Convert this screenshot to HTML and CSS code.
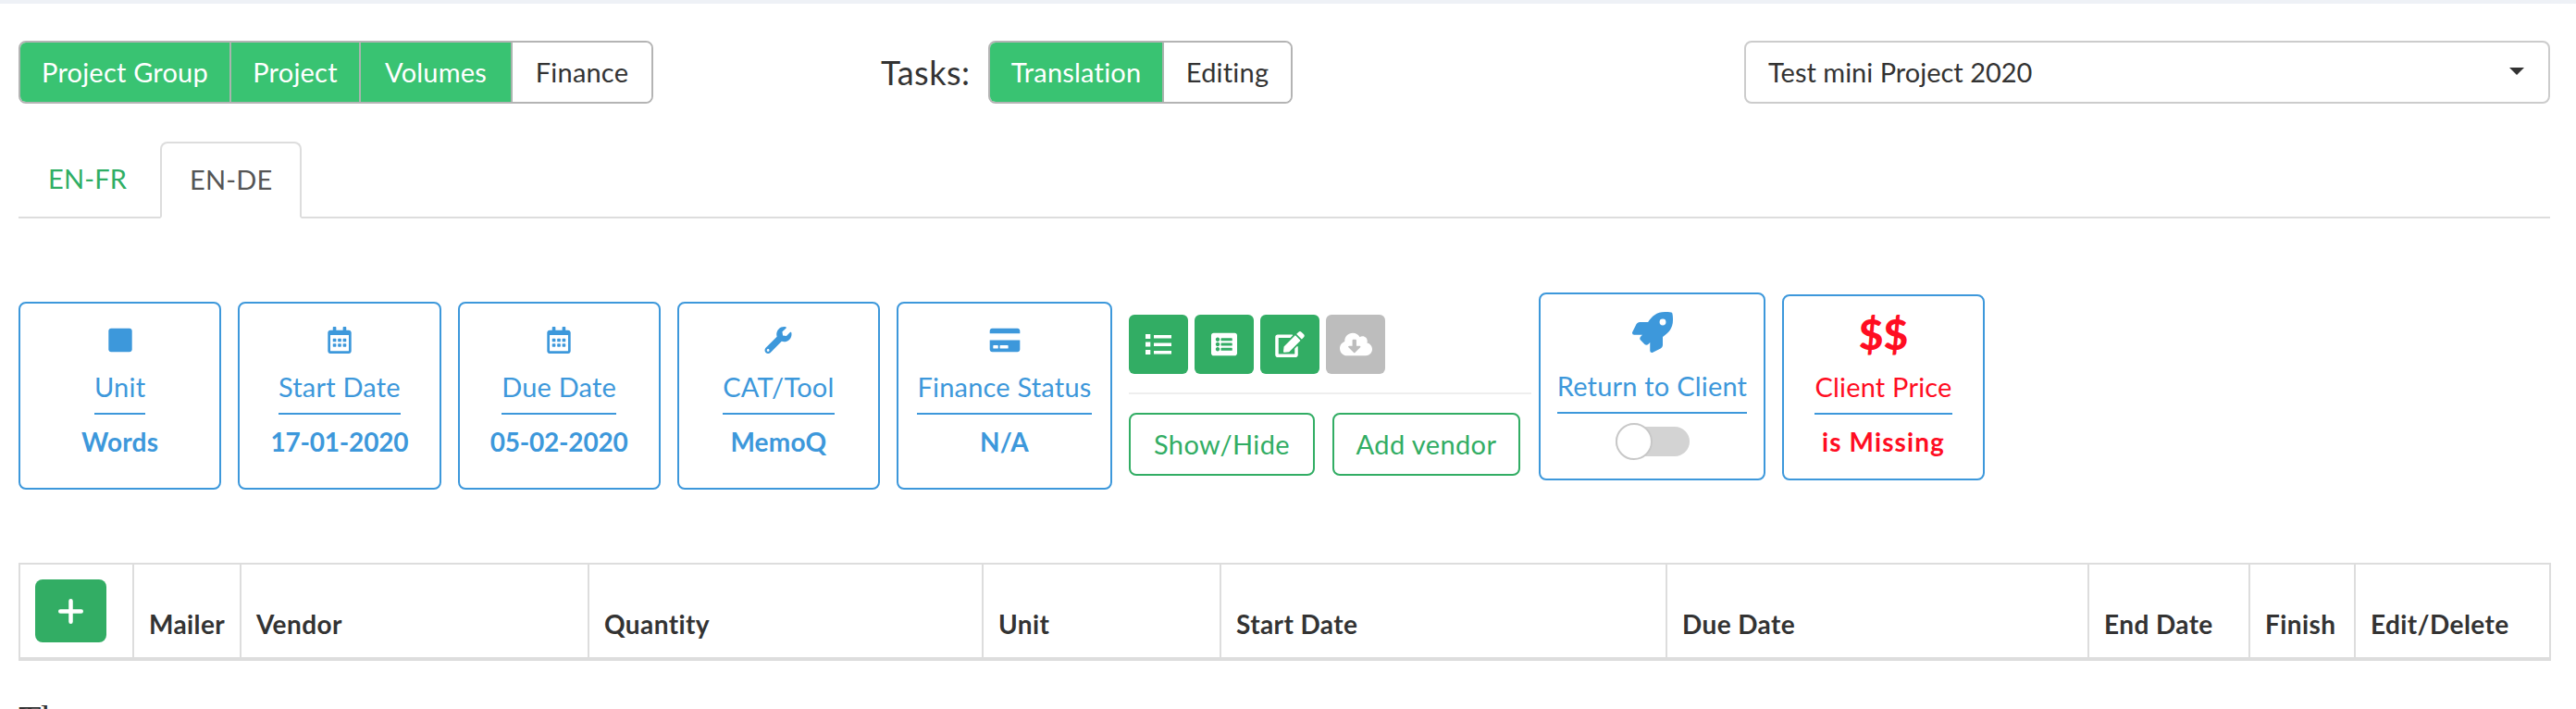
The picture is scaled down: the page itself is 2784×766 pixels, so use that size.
FILE: index.html
```html
<!DOCTYPE html>
<html lang="en">
<head>
<meta charset="utf-8">
<title>Project tasks</title>
<link rel="stylesheet" href="styles.css">
</head>
<body>
<div class="topbar"></div>
<main class="page">
  <section class="toolbar">
    <div class="seg seg-main">
      <a class="seg-btn on w1">Project Group</a><a class="seg-btn on w2">Project</a><a class="seg-btn on w3">Volumes</a><a class="seg-btn w4">Finance</a>
    </div>
    <div class="tasks">
      <span class="tasks-label">Tasks:</span>
      <div class="seg">
        <a class="seg-btn on w5">Translation</a><a class="seg-btn w6">Editing</a>
      </div>
    </div>
    <div class="select"><span>Test mini Project 2020</span><i class="caret"></i></div>
  </section>

  <nav class="tabs">
    <a class="tab">EN-FR</a>
    <a class="tab active">EN-DE</a>
  </nav>

  <section class="cards">
    <div class="card c1">
      <svg class="ic" viewBox="0 0 448 512"><path d="M400 32H48C21.500 32 0 53.500 0 80v352c0 26.500 21.500 48 48 48h352c26.500 0 48-21.500 48-48V80c0-26.500-21.500-48-48-48z"/></svg>
      <div class="lbl"><span>Unit</span></div>
      <div class="val">Words</div>
    </div>
    <div class="card c1">
      <svg class="ic" viewBox="0 0 448 512"><path d="M148 288h-40c-6.600 0-12-5.400-12-12v-40c0-6.600 5.400-12 12-12h40c6.600 0 12 5.400 12 12v40c0 6.600-5.400 12-12 12zm108-12v-40c0-6.600-5.400-12-12-12h-40c-6.600 0-12 5.400-12 12v40c0 6.600 5.400 12 12 12h40c6.600 0 12-5.400 12-12zm96 0v-40c0-6.600-5.400-12-12-12h-40c-6.600 0-12 5.400-12 12v40c0 6.600 5.400 12 12 12h40c6.600 0 12-5.400 12-12zm-96 96v-40c0-6.600-5.400-12-12-12h-40c-6.600 0-12 5.400-12 12v40c0 6.600 5.400 12 12 12h40c6.600 0 12-5.400 12-12zm-96 0v-40c0-6.600-5.400-12-12-12h-40c-6.600 0-12 5.400-12 12v40c0 6.600 5.400 12 12 12h40c6.600 0 12-5.400 12-12zm192 0v-40c0-6.600-5.400-12-12-12h-40c-6.600 0-12 5.400-12 12v40c0 6.600 5.400 12 12 12h40c6.600 0 12-5.400 12-12zm96-260v352c0 26.500-21.500 48-48 48H48c-26.500 0-48-21.500-48-48V112c0-26.500 21.500-48 48-48h48V12c0-6.600 5.400-12 12-12h40c6.600 0 12 5.400 12 12v52h128V12c0-6.600 5.400-12 12-12h40c6.600 0 12 5.400 12 12v52h48c26.500 0 48 21.500 48 48zm-48 346V160H48v298c0 3.300 2.700 6 6 6h340c3.300 0 6-2.700 6-6z"/></svg>
      <div class="lbl"><span>Start Date</span></div>
      <div class="val date">17-01-2020</div>
    </div>
    <div class="card c1">
      <svg class="ic" viewBox="0 0 448 512"><path d="M148 288h-40c-6.600 0-12-5.400-12-12v-40c0-6.600 5.400-12 12-12h40c6.600 0 12 5.400 12 12v40c0 6.600-5.400 12-12 12zm108-12v-40c0-6.600-5.400-12-12-12h-40c-6.600 0-12 5.400-12 12v40c0 6.600 5.400 12 12 12h40c6.600 0 12-5.400 12-12zm96 0v-40c0-6.600-5.400-12-12-12h-40c-6.600 0-12 5.400-12 12v40c0 6.600 5.400 12 12 12h40c6.600 0 12-5.400 12-12zm-96 96v-40c0-6.600-5.400-12-12-12h-40c-6.600 0-12 5.400-12 12v40c0 6.600 5.400 12 12 12h40c6.600 0 12-5.400 12-12zm-96 0v-40c0-6.600-5.400-12-12-12h-40c-6.600 0-12 5.400-12 12v40c0 6.600 5.400 12 12 12h40c6.600 0 12-5.400 12-12zm192 0v-40c0-6.600-5.400-12-12-12h-40c-6.600 0-12 5.400-12 12v40c0 6.600 5.400 12 12 12h40c6.600 0 12-5.400 12-12zm96-260v352c0 26.500-21.500 48-48 48H48c-26.500 0-48-21.500-48-48V112c0-26.500 21.500-48 48-48h48V12c0-6.600 5.400-12 12-12h40c6.600 0 12 5.400 12 12v52h128V12c0-6.600 5.400-12 12-12h40c6.600 0 12 5.400 12 12v52h48c26.500 0 48 21.500 48 48zm-48 346V160H48v298c0 3.300 2.700 6 6 6h340c3.300 0 6-2.700 6-6z"/></svg>
      <div class="lbl"><span>Due Date</span></div>
      <div class="val date">05-02-2020</div>
    </div>
    <div class="card c1">
      <svg class="ic" viewBox="0 0 512 512"><path d="M507.730 109.100c-2.240-9.030-13.540-12.090-20.120-5.510l-74.360 74.360-67.880-11.310-11.310-67.880 74.360-74.360c6.620-6.620 3.430-17.900-5.660-20.160-47.380-11.740-99.550.91-136.580 37.930-39.640 39.640-50.550 97.100-34.050 147.200L18.740 402.760c-24.990 24.990-24.990 65.510 0 90.500 24.990 24.990 65.510 24.990 90.500 0l213.210-213.210c50.120 16.710 107.470 5.680 147.370-34.220 37.070-37.070 49.700-89.320 37.910-136.730zM64 472c-13.250 0-24-10.750-24-24 0-13.260 10.750-24 24-24s24 10.740 24 24c0 13.250-10.750 24-24 24z"/></svg>
      <div class="lbl"><span>CAT/Tool</span></div>
      <div class="val">MemoQ</div>
    </div>
    <div class="card c2">
      <svg class="ic" viewBox="0 0 576 512"><path d="M0 432c0 26.500 21.500 48 48 48h480c26.500 0 48-21.500 48-48V256H0v176zm192-68c0-6.600 5.400-12 12-12h136c6.600 0 12 5.400 12 12v40c0 6.600-5.400 12-12 12H204c-6.600 0-12-5.400-12-12v-40zm-128 0c0-6.600 5.400-12 12-12h72c6.600 0 12 5.400 12 12v40c0 6.600-5.400 12-12 12H76c-6.600 0-12-5.400-12-12v-40zM576 80v48H0V80c0-26.500 21.500-48 48-48h480c26.500 0 48 21.500 48 48z"/></svg>
      <div class="lbl"><span>Finance Status</span></div>
      <div class="val">N/A</div>
    </div>

    <div class="actions">
      <div class="icon-row">
        <a class="icon-btn">
          <svg class="ib-list" viewBox="0 0 28 22"><path d="M0 0h5.300v5H0zM0 8.500h5.300v5H0zM0 17h5.300v5H0zM9 1h19v3.500H9zM9 9.500h19V13H9zM9 18h19v3.500H9z"/></svg>
        </a>
        <a class="icon-btn">
          <svg class="ib" viewBox="0 0 512 512"><path d="M464 480H48c-26.510 0-48-21.490-48-48V80c0-26.510 21.490-48 48-48h416c26.510 0 48 21.490 48 48v352c0 26.510-21.490 48-48 48zM128 120c-22.091 0-40 17.909-40 40s17.909 40 40 40 40-17.909 40-40-17.909-40-40-40zm0 96c-22.091 0-40 17.909-40 40s17.909 40 40 40 40-17.909 40-40-17.909-40-40-40zm0 96c-22.091 0-40 17.909-40 40s17.909 40 40 40 40-17.909 40-40-17.909-40-40-40zm288-136v-32c0-6.627-5.373-12-12-12H204c-6.627 0-12 5.373-12 12v32c0 6.627 5.373 12 12 12h200c6.627 0 12-5.373 12-12zm0 96v-32c0-6.627-5.373-12-12-12H204c-6.627 0-12 5.373-12 12v32c0 6.627 5.373 12 12 12h200c6.627 0 12-5.373 12-12zm0 96v-32c0-6.627-5.373-12-12-12H204c-6.627 0-12 5.373-12 12v32c0 6.627 5.373 12 12 12h200c6.627 0 12-5.373 12-12z"/></svg>
        </a>
        <a class="icon-btn">
          <svg class="ib-edit" viewBox="0 0 576 512"><path d="M402.600 83.200l90.200 90.200c3.800 3.800 3.800 10 0 13.800L274.400 405.600l-92.800 10.300c-12.400 1.400-22.900-9.100-21.500-21.500l10.300-92.800L388.800 83.200c3.800-3.800 10-3.800 13.800 0zm162-22.900l-48.800-48.800c-15.200-15.200-39.900-15.200-55.200 0l-35.400 35.400c-3.800 3.800-3.800 10 0 13.800l90.200 90.200c3.800 3.800 10 3.800 13.800 0l35.400-35.400c15.200-15.300 15.200-40 0-55.200zM384 346.200V448H64V128h229.800c3.200 0 6.200-1.300 8.500-3.500l40-40c7.600-7.600 2.200-20.500-8.500-20.500H48C21.500 64 0 85.500 0 112v352c0 26.500 21.500 48 48 48h352c26.500 0 48-21.500 48-48V306.200c0-10.700-12.900-16-20.500-8.500l-40 40c-2.200 2.300-3.500 5.300-3.500 8.500z"/></svg>
        </a>
        <a class="icon-btn off">
          <svg class="ib-cloud" viewBox="0 0 640 512"><path d="M537.600 226.600c4.100-10.700 6.400-22.400 6.400-34.600 0-53-43-96-96-96-19.700 0-38.100 6-53.300 16.200C367 64.200 315.300 32 256 32c-88.400 0-160 71.600-160 160 0 2.700.1 5.400.2 8.100C40.200 219.800 0 273.200 0 336c0 79.500 64.500 144 144 144h368c70.700 0 128-57.300 128-128 0-61.900-44-113.600-102.400-125.400zm-132.900 88.700L299.300 420.700c-6.200 6.200-16.400 6.200-22.600 0L171.300 315.300c-10.100-10.100-2.900-27.300 11.300-27.300H248V176c0-8.800 7.200-16 16-16h48c8.800 0 16 7.200 16 16v112h65.400c14.200 0 21.400 17.200 11.300 27.300z"/></svg>
        </a>
      </div>
      <div class="action-rule"></div>
      <div class="outline-row">
        <a class="outline-btn show">Show/Hide</a>
        <a class="outline-btn add">Add vendor</a>
      </div>
    </div>

    <div class="card c3">
      <svg class="ic ic-rocket" viewBox="0 0 512 512"><path d="M505.120 19.094c-1.189-5.531-6.658-11-12.207-12.188C460.716 0 435.507 0 410.407 0 307.175 0 245.269 55.203 199.052 128H94.838c-16.348.016-35.557 11.875-42.887 26.484L2.516 253.297A28.400 28.400 0 0 0 0 264a24.009 24.009 0 0 0 24.006 24h103.810l-22.475 22.469c-11.365 11.361-12.996 32.258 0 45.250l50.904 50.906c11.156 11.188 32.156 13.156 45.277 0l22.475-22.469V488a24.009 24.009 0 0 0 24.006 24 28.559 28.559 0 0 0 10.707-2.516l98.728-49.391c14.629-7.297 26.508-26.500 26.508-42.859V312.797c72.598-46.313 128.035-108.406 128.035-211.094.0-25.203.0-50.406-6.955-82.609zM384.040 168a40 40 0 1 1 40.010-40 40.023 40.023 0 0 1-40.010 40z"/></svg>
      <div class="lbl"><span>Return to Client</span></div>
      <div class="switch"><i class="knob"></i></div>
    </div>

    <div class="card c4 price">
      <div class="dollars">$$</div>
      <div class="lbl"><span>Client Price</span></div>
      <div class="val missing">is Missing</div>
    </div>
  </section>

  <table class="grid">
    <colgroup>
      <col class="k1"><col class="k2"><col class="k3"><col class="k4"><col class="k5"><col class="k6"><col class="k7"><col class="k8"><col class="k9"><col class="k10">
    </colgroup>
    <thead>
      <tr>
        <th><a class="plus"><svg viewBox="0 0 24 24"><path d="M12 2v20M2 12h20"/></svg></a></th>
        <th>Mailer</th><th>Vendor</th><th>Quantity</th><th>Unit</th><th>Start Date</th><th>Due Date</th><th>End Date</th><th>Finish</th><th>Edit/Delete</th>
      </tr>
    </thead>
  </table>
  <p class="cut">The</p>
</main>
</body>
</html>
```
FILE: styles.css
```css
* { box-sizing: border-box; }
html, body { margin: 0; padding: 0; }
body {
  height: 766px;
  overflow: hidden;
  background: #fff;
  color: #333;
  font-family: "Lato", "Liberation Sans", sans-serif;
  font-size: 29px;
  letter-spacing: .2px;
}
a { display: inline-block; }

.topbar { height: 4px; background: #eef1f6; }
.page { padding: 0 28px 0 20px; }

/* top toolbar */
.toolbar { display: flex; align-items: center; padding-top: 40px; height: 108px; }
.seg {
  display: flex;
  height: 68px;
  border: 2px solid #b4b4b4;
  border-radius: 8px;
  overflow: hidden;
}
.seg-btn {
  display: flex;
  align-items: center;
  justify-content: center;
  padding-bottom: 2px;
  color: #333;
  background: #fff;
}
.seg-btn.on { background: #39c372; color: #fff; border-right: 2px solid #a9b4ae; }
.seg-btn:last-child { border-right: 0; }
.w1 { width: 228px; } .w2 { width: 140px; } .w3 { width: 164px; } .w4 { width: 150px; }
.w5 { width: 188px; } .w6 { width: 137px; }
.tasks { display: flex; align-items: center; margin-left: 246px; }
.tasks-label { width: 116px; font-size: 36px; letter-spacing: .5px; }
.select {
  margin-left: auto;
  width: 871px;
  height: 68px;
  display: flex;
  align-items: center;
  justify-content: space-between;
  padding: 0 26px 2px 24px;
  border: 2px solid #ccc;
  border-radius: 8px;
  letter-spacing: 0;
}
.caret {
  width: 0; height: 0;
  border-left: 8px solid transparent;
  border-right: 8px solid transparent;
  border-top: 8px solid #333;
}

/* tabs */
.tabs {
  display: flex;
  margin-top: 41px;
  height: 83px;
  border-bottom: 2px solid #ddd;
}
.tab {
  width: 153px;
  display: flex;
  align-items: center;
  padding: 0 0 2px 30px;
  color: #2fae64;
  border: 2px solid transparent;
}
.tab.active {
  height: 83px;
  color: #555;
  background: #fff;
  border-color: #ddd;
  border-bottom-color: #fff;
  border-radius: 8px 8px 0 0;
}

/* cards row */
.cards { display: flex; align-items: flex-start; margin-top: 80px; height: 213px; }
.card {
  flex: none;
  margin-top: 10px;
  margin-right: 18px;
  height: 203px;
  border: 2px solid #3d98db;
  border-radius: 8px;
  color: #3d98db;
  text-align: center;
  padding-top: 25px;
}
.c1 { width: 219.25px; }
.c2 { width: 233px; }
.c3 { width: 245px; margin-top: 0; padding-top: 19px; }
.c4 { width: 219px; height: 201px; margin-top: 2px; margin-right: 0; padding-top: 16px; }
.ic { display: block; width: 36px; height: 29px; margin: 0 auto; fill: #3d98db; }
.ic-rocket { width: 44px; height: 44px; }
.lbl { display: flex; justify-content: center; margin-top: 16px; line-height: 40px; }
.lbl span { height: 50px; border-bottom: 2px solid #3d98db; }
.val { margin-top: 11px; font-weight: 700; font-size: 28px; line-height: 36px; }
.date { letter-spacing: -.2px; }
.missing { letter-spacing: 1.1px; }

/* middle actions */
.actions { flex: none; width: 435px; margin-right: 8px; padding-top: 24px; }
.icon-row { display: flex; gap: 7px; }
.icon-btn {
  width: 64px; height: 64px;
  border-radius: 6px;
  background: #32ad64;
  display: flex;
  align-items: center;
  justify-content: center;
  fill: #fff;
}
.icon-btn.off { background: #bdbdbd; }
.ib { width: 28px; height: 28px; }
.ib-list { width: 28px; height: 22px; }
.ib-edit { width: 32px; height: 28px; }
.ib-cloud { width: 35px; height: 28px; }
.action-rule { height: 2px; margin-top: 20px; background: #eee; }
.outline-row { display: flex; margin-top: 20px; gap: 19px; }
.outline-btn {
  height: 68px;
  display: flex;
  align-items: center;
  justify-content: center;
  padding-bottom: 2px;
  border: 2px solid #32ad64;
  border-radius: 8px;
  color: #32ad64;
  letter-spacing: .4px;
}
.show { width: 201px; }
.add { width: 203px; }

/* toggle */
.switch {
  position: relative;
  width: 80px;
  height: 32px;
  margin: 14px auto 0;
  border-radius: 16px;
  background: #d3d3d3;
}
.knob {
  position: absolute;
  left: 0;
  top: -4px;
  width: 40px;
  height: 40px;
  border-radius: 50%;
  background: #fff;
  border: 2px solid #c8c8c8;
}

/* price card */
.price { color: #ff0d22; }
.dollars { font-weight: 900; font-size: 46px; line-height: 50px; letter-spacing: 0; }
.price .lbl { margin-top: 12px; }

/* table */
.grid {
  width: 2735px;
  margin-top: 79px;
  table-layout: fixed;
  border-collapse: collapse;
  border-top: 2px solid #ddd;
}
.grid th {
  height: 103px;
  padding: 0 16px 18px;
  vertical-align: bottom;
  text-align: left;
  font-weight: 700;
  font-size: 28px;
  line-height: 36px;
  letter-spacing: .4px;
  white-space: nowrap;
  color: #333;
  border-left: 2px solid #ddd;
  border-right: 2px solid #ddd;
  border-bottom: 4px solid #ddd;
}
.grid th:first-child { padding: 0 0 0 16px; vertical-align: middle; }
.k1 { width: 123px; } .k2 { width: 116px; } .k3 { width: 376px; } .k4 { width: 426px; }
.k5 { width: 257px; } .k6 { width: 482px; } .k7 { width: 456px; } .k8 { width: 174px; }
.k9 { width: 114px; } .k10 { width: 211px; }
.plus {
  width: 77px; height: 68px;
  border-radius: 8px;
  background: #32ad64;
  display: flex;
  align-items: center;
  justify-content: center;
}
.plus svg { width: 27px; height: 27px; fill: none; stroke: #fff; stroke-width: 4; stroke-linecap: round; }

.cut {
  margin: 40px 0 0;
  font-family: "Liberation Serif", serif;
  font-size: 40px;
  line-height: 46px;
  letter-spacing: 0;
  color: #333;
}
```
